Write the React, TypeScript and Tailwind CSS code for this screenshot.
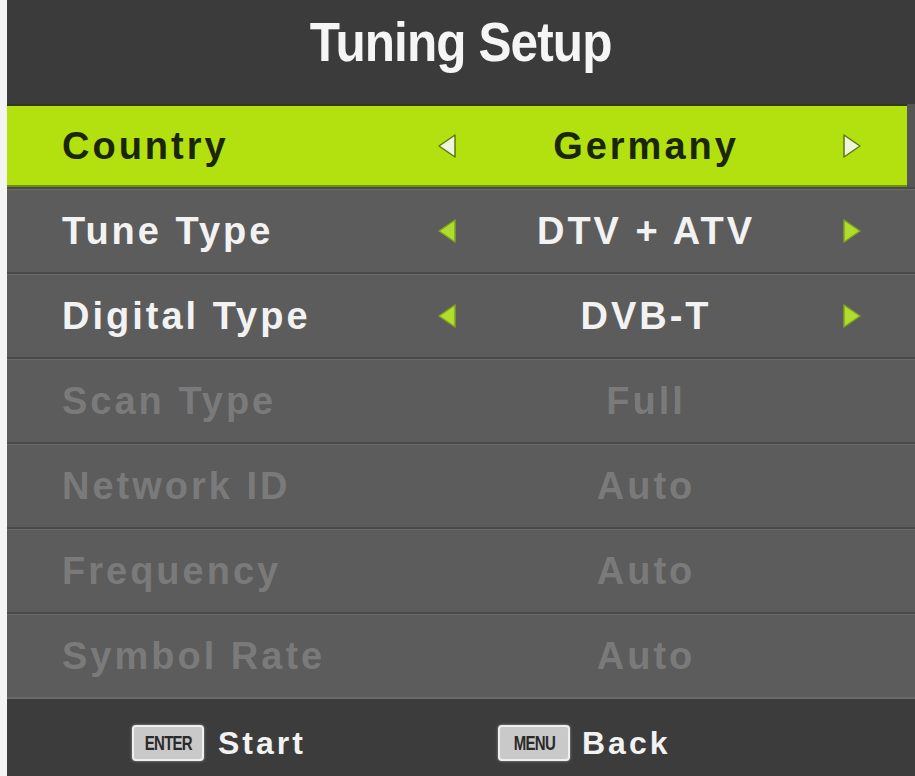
import React from "react";

const font = { fontFamily: '"Liberation Sans", Arial, sans-serif' };

function Arrow({ dir, active }: { dir: "l" | "r"; active: boolean }) {
  const fill = active ? "#eef5dc" : "#b0dc2c";
  const stroke = active ? "#5a7a10" : "#7fa322";
  const d = dir === "l" ? "M19 2 L3 13 L19 24 Z" : "M3 2 L19 13 L3 24 Z";
  return (
    <svg className="h-[26px] w-[22px] shrink-0" width="22" height="26" viewBox="0 0 22 26">
      <path d={d} fill={fill} stroke={stroke} strokeWidth="1.5" strokeLinejoin="round" />
    </svg>
  );
}

type Row = { label: string; value: string; kind: "sel" | "on" | "off" };

const rows: Row[] = [
  { label: "Tune Type", value: "DTV + ATV", kind: "on" },
  { label: "Digital Type", value: "DVB-T", kind: "on" },
  { label: "Scan Type", value: "Full", kind: "off" },
  { label: "Network ID", value: "Auto", kind: "off" },
  { label: "Frequency", value: "Auto", kind: "off" },
  { label: "Symbol Rate", value: "Auto", kind: "off" },
];

function RowView({ r }: { r: Row }) {
  const color = r.kind === "off" ? "text-[#7a7a7a]" : "text-[#f2f2f2]";
  return (
    <div className="flex h-[85px] items-center border-t-2 border-[#4a4a4a] bg-[#5c5c5c] shadow-[inset_0_1px_0_#6b6b6b]">
      <div className={`w-[407px] pl-[55px] text-[38px] font-bold tracking-[3px] leading-none ${color}`}>{r.label}</div>
      <div className="flex w-[66px] justify-center">{r.kind === "on" && <Arrow dir="l" active={false} />}</div>
      <div className={`flex w-[332px] justify-center text-[38px] font-bold tracking-[3px] leading-none ${color}`}>{r.value}</div>
      <div className="flex w-[80px] justify-center">{r.kind === "on" && <Arrow dir="r" active={false} />}</div>
    </div>
  );
}

function Badge({ text }: { text: string }) {
  return (
    <div className="flex h-[36px] w-[72px] items-center justify-center rounded-[4px] border-2 border-[#efefef] bg-[#c9c9c9] shadow-[0_0_3px_#999]">
      <span className="inline-block scale-x-75 text-[20px] font-bold tracking-[-1px] text-[#2a2a2a] leading-none">{text}</span>
    </div>
  );
}

export default function App() {
  return (
    <div className="flex h-[776px] w-[915px] bg-white" style={font}>
      <div className="w-[7px] shrink-0 bg-[#f4f4f4]" />
      <div className="flex flex-1 flex-col bg-[#5c5c5c]">
        <div className="flex h-[104px] items-start justify-center bg-[#3b3b3b] pt-[15px]">
          <span className="inline-block scale-x-90 text-[55px] font-bold tracking-[-1px] text-[#f5f5f5] leading-none">Tuning Setup</span>
        </div>
        <div className="bg-[#555555] pr-[8px]">
          <div className="flex h-[83px] items-center border-y-2 border-t-[#2f3a10] border-b-[#6e8f0c] bg-[#b3e00f]">
            <div className="w-[407px] pl-[55px] text-[38px] font-bold tracking-[3px] text-[#1b2607] leading-none">Country</div>
            <div className="flex w-[66px] justify-center"><Arrow dir="l" active /></div>
            <div className="flex w-[332px] justify-center text-[38px] font-bold tracking-[3px] text-[#1b2607] leading-none">Germany</div>
            <div className="flex w-[80px] justify-center"><Arrow dir="r" active /></div>
          </div>
        </div>
        {rows.map((r) => (
          <RowView key={r.label} r={r} />
        ))}
        <div className="flex flex-1 items-center border-t-2 border-[#6a6a6a] bg-[#3c3c3c] pl-[125px] pt-[10px]">
          <div className="flex w-[366px] items-center gap-[14px]">
            <Badge text="ENTER" />
            <span className="text-[32px] font-bold tracking-[3px] text-[#f2f2f2] leading-none">Start</span>
          </div>
          <div className="flex items-center gap-[12px]">
            <Badge text="MENU" />
            <span className="text-[32px] font-bold tracking-[3px] text-[#f2f2f2] leading-none">Back</span>
          </div>
        </div>
      </div>
    </div>
  );
}
